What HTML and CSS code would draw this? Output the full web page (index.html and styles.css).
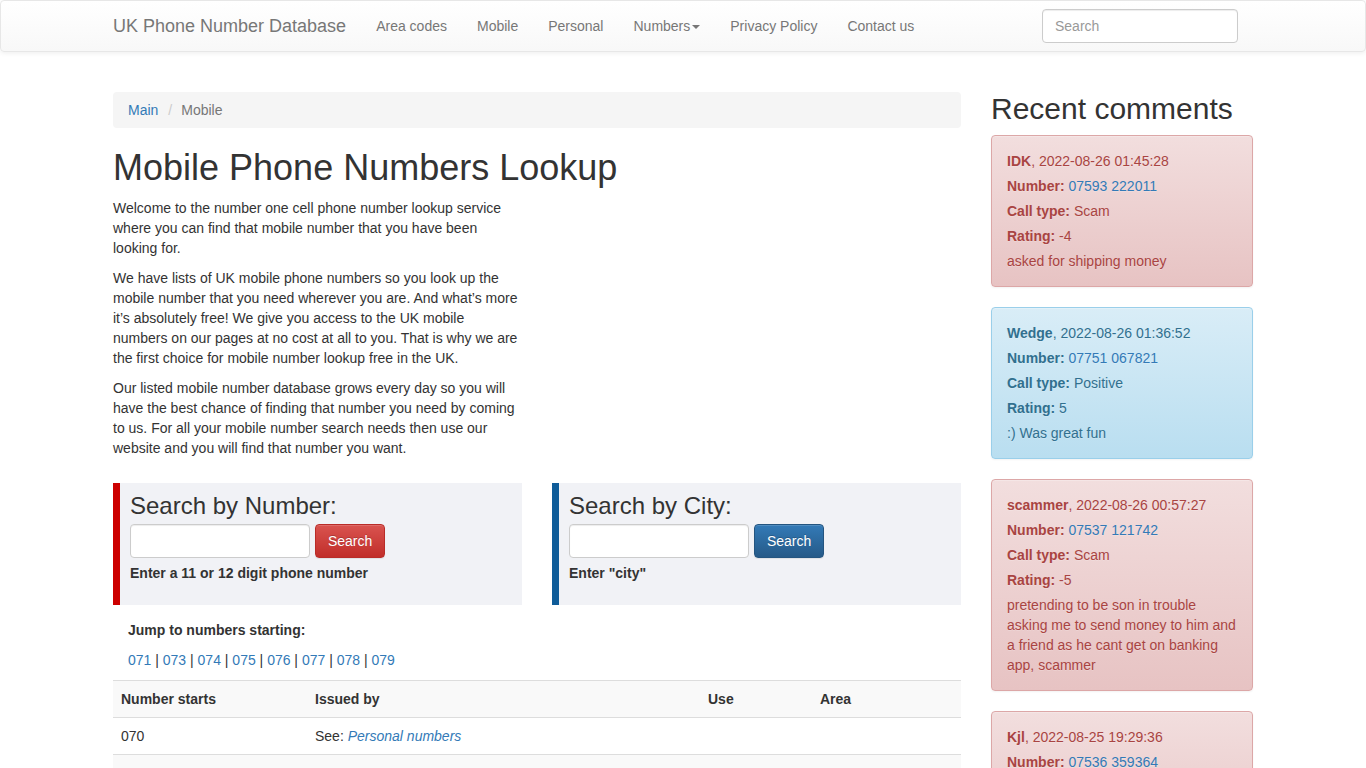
FILE: index.html
```html
<!DOCTYPE html>
<html>
<head>
	<title>Mobile Phone Numbers Lookup</title>
	<link rel="stylesheet" href="styles.css">
</head>
<body>
	<nav class="navbar">
		<div class="container nav-inner">
			<a class="brand" href="#">UK Phone Number Database</a>
			<ul class="nav">
				<li><a href="#">Area codes</a></li>
				<li><a href="#">Mobile</a></li>
				<li><a href="#">Personal</a></li>
				<li><a href="#">Numbers<span class="caret"></span></a></li>
				<li><a href="#">Privacy Policy</a></li>
				<li><a href="#">Contact us</a></li>
			</ul>
			<form class="nav-search">
				<input type="text" class="form-control nav-input" placeholder="Search">
			</form>
		</div>
	</nav>

	<div class="page">
		<div class="main">
			<ol class="breadcrumb">
				<li><a href="#">Main</a></li>
				<li class="active">Mobile</li>
			</ol>
			<h1>Mobile Phone Numbers Lookup</h1>
			<div class="row">
				<div class="half">
					<p>Welcome to the number one cell phone number lookup service where you can find that mobile number that you have been looking for.</p>
					<p>We have lists of UK mobile phone numbers so you look up the mobile number that you need wherever you are. And what’s more it’s absolutely free! We give you access to the UK mobile numbers on our pages at no cost at all to you. That is why we are the first choice for mobile number lookup free in the UK.</p>
					<p>Our listed mobile number database grows every day so you will have the best chance of finding that number you need by coming to us. For all your mobile number search needs then use our website and you will find that number you want.</p>
				</div>
				<div class="half"></div>
			</div>

			<div class="row search-row">
				<div class="half">
					<form class="search-box by-number">
						<h3>Search by Number:</h3>
						<input type="text" class="form-control box-input">
						<button type="submit" class="btn btn-danger">Search</button>
						<label>Enter a 11 or 12 digit phone number</label>
					</form>
				</div>
				<div class="half">
					<form class="search-box by-city">
						<h3>Search by City:</h3>
						<input type="text" class="form-control box-input">
						<button type="submit" class="btn btn-primary">Search</button>
						<label>Enter "city"</label>
					</form>
				</div>
			</div>

			<div class="jump">
				<p><strong>Jump to numbers starting:</strong></p>
				<p><a href="#">071</a> | <a href="#">073</a> | <a href="#">074</a> | <a href="#">075</a> | <a href="#">076</a> | <a href="#">077</a> | <a href="#">078</a> | <a href="#">079</a></p>
			</div>

			<table class="table">
				<tbody>
					<tr class="head">
						<td class="c1">Number starts</td>
						<td class="c2">Issued by</td>
						<td class="c3">Use</td>
						<td class="c4">Area</td>
					</tr>
					<tr>
						<td>070</td>
						<td>See: <a href="#"><em>Personal numbers</em></a></td>
						<td></td>
						<td></td>
					</tr>
					<tr>
						<td>&nbsp;</td>
						<td>&nbsp;</td>
						<td></td>
						<td></td>
					</tr>
				</tbody>
			</table>
		</div>

		<aside class="side">
			<h2>Recent comments</h2>
			<div class="alert alert-danger">
				<div class="line"><strong>IDK</strong>, 2022-08-26 01:45:28</div>
				<div class="line"><strong>Number:</strong> <a href="#">07593 222011</a></div>
				<div class="line"><strong>Call type:</strong> Scam</div>
				<div class="line"><strong>Rating:</strong> -4</div>
				<div>asked for shipping money</div>
			</div>
			<div class="alert alert-info">
				<div class="line"><strong>Wedge</strong>, 2022-08-26 01:36:52</div>
				<div class="line"><strong>Number:</strong> <a href="#">07751 067821</a></div>
				<div class="line"><strong>Call type:</strong> Positive</div>
				<div class="line"><strong>Rating:</strong> 5</div>
				<div>:) Was great fun</div>
			</div>
			<div class="alert alert-danger">
				<div class="line"><strong>scammer</strong>, 2022-08-26 00:57:27</div>
				<div class="line"><strong>Number:</strong> <a href="#">07537 121742</a></div>
				<div class="line"><strong>Call type:</strong> Scam</div>
				<div class="line"><strong>Rating:</strong> -5</div>
				<div>pretending to be son in trouble asking me to send money to him and a friend as he cant get on banking app, scammer</div>
			</div>
			<div class="alert alert-danger">
				<div class="line"><strong>Kjl</strong>, 2022-08-25 19:29:36</div>
				<div class="line"><strong>Number:</strong> <a href="#">07536 359364</a></div>
				<div class="line"><strong>Call type:</strong> Scam</div>
				<div class="line"><strong>Rating:</strong> -5</div>
				<div>scam call</div>
			</div>
		</aside>
	</div>
</body>
</html>
```

FILE: styles.css
```css
* {
	box-sizing: border-box;
}
body {
	margin: 0;
	font-family: "Liberation Sans", Arial, sans-serif;
	font-size: 14px;
	line-height: 20px;
	color: #333;
	background: #fff;
}
a {
	color: #337ab7;
	text-decoration: none;
}
p {
	margin: 0 0 10px;
}
.container {
	width: 1170px;
	margin: 0 auto;
	padding: 0 15px;
}

/* navbar */
.navbar {
	height: 52px;
	border: 1px solid #e7e7e7;
	border-radius: 4px;
	background: linear-gradient(to bottom, #fff 0, #f8f8f8 100%);
	box-shadow: inset 0 1px 0 rgba(255,255,255,.15), 0 1px 5px rgba(0,0,0,.075);
	margin-bottom: 20px;
}
.nav-inner {
	display: flex;
	align-items: flex-start;
	height: 50px;
}
.brand {
	font-size: 18px;
	line-height: 20px;
	padding: 15px;
	margin-left: -15px;
	color: #777;
	text-shadow: 0 1px 0 rgba(255,255,255,.25);
}
.nav {
	display: flex;
	list-style: none;
	margin: 0;
	padding: 0;
}
.nav a {
	display: block;
	padding: 15px;
	color: #777;
	text-shadow: 0 1px 0 rgba(255,255,255,.25);
}
.caret {
	display: inline-block;
	width: 0;
	height: 0;
	margin-left: 2px;
	vertical-align: middle;
	border-top: 4px solid #777;
	border-left: 4px solid transparent;
	border-right: 4px solid transparent;
}
.nav-search {
	margin: 8px 0 0 auto;
	padding: 0 15px;
}
.form-control {
	height: 34px;
	padding: 6px 12px;
	font-family: inherit;
	font-size: 14px;
	color: #555;
	background: #fff;
	border: 1px solid #ccc;
	border-radius: 4px;
	box-shadow: inset 0 1px 1px rgba(0,0,0,.075);
}
.form-control::placeholder {
	color: #999;
}
.nav-input {
	width: 196px;
}

/* layout */
.page {
	display: flex;
	width: 1170px;
	margin: 0 auto;
}
.main {
	width: 878px;
	flex: none;
	padding: 20px 15px 0;
}
.side {
	width: 292px;
	flex: none;
	padding: 0 15px;
}
.row {
	display: flex;
	margin: 0 -15px;
}
.half {
	width: 50%;
	padding: 0 15px;
}

.breadcrumb {
	list-style: none;
	margin: 0 0 20px;
	padding: 8px 15px;
	background: #f5f5f5;
	border-radius: 4px;
	display: flex;
}
.breadcrumb li + li:before {
	content: "/";
	padding: 0 9px 0 10px;
	color: #ccc;
}
.breadcrumb .active {
	color: #777;
}
h1 {
	font-size: 36px;
	font-weight: normal;
	line-height: 39.6px;
	margin: 0 0 10px;
}

/* search boxes */
.search-row {
	margin-top: 15px;
}
.search-box {
	background: #f1f2f6;
	padding: 10px 10px 17px 10px;
	border-left: 7px solid #cc0000;
}
.search-box.by-city {
	border-left-color: #0f5c99;
}
.search-box h3 {
	font-size: 24px;
	font-weight: normal;
	line-height: 26px;
	margin: 0 0 5px;
}
.box-input {
	width: 180px;
	margin-right: 1px;
	vertical-align: middle;
}
.btn {
	display: inline-block;
	height: 34px;
	padding: 6px 12px;
	font-family: inherit;
	font-size: 14px;
	line-height: 20px;
	color: #fff;
	border: 1px solid transparent;
	border-radius: 4px;
	vertical-align: middle;
	text-shadow: 0 -1px 0 rgba(0,0,0,.2);
	box-shadow: inset 0 1px 0 rgba(255,255,255,.15), 0 1px 1px rgba(0,0,0,.075);
	cursor: pointer;
}
.btn-danger {
	background: linear-gradient(to bottom, #d9534f 0, #c12e2a 100%);
	border-color: #b92c28;
}
.btn-primary {
	background: linear-gradient(to bottom, #337ab7 0, #265a88 100%);
	border-color: #245580;
}
.search-box label {
	display: block;
	font-weight: bold;
	margin: 5px 0;
}

/* jump + table */
.jump {
	padding: 15px 15px 0;
}
.table {
	width: 100%;
	border-collapse: collapse;
	margin-bottom: 20px;
}
.table td {
	padding: 8px;
	border-top: 1px solid #ddd;
	vertical-align: top;
}
.table tr:nth-child(odd) td {
	background: #f9f9f9;
}
.table .head td {
	font-weight: bold;
}
.c1 { width: 194px; }
.c2 { width: 393px; }
.c3 { width: 112px; }

/* comments */
.side h2 {
	font-size: 30px;
	font-weight: normal;
	line-height: 33px;
	margin: 20px 0 10px;
}
.alert {
	padding: 15px;
	margin-bottom: 20px;
	border: 1px solid transparent;
	border-radius: 4px;
	text-shadow: 0 1px 0 rgba(255,255,255,.2);
	box-shadow: inset 0 1px 0 rgba(255,255,255,.25), 0 1px 2px rgba(0,0,0,.05);
}
.alert .line {
	margin-bottom: 5px;
}
.alert-danger {
	color: #a94442;
	background: linear-gradient(to bottom, #f2dede 0, #e7c3c3 100%);
	border-color: #dca7a7;
}
.alert-info {
	color: #31708f;
	background: linear-gradient(to bottom, #d9edf7 0, #b9def0 100%);
	border-color: #9acfea;
}
```
